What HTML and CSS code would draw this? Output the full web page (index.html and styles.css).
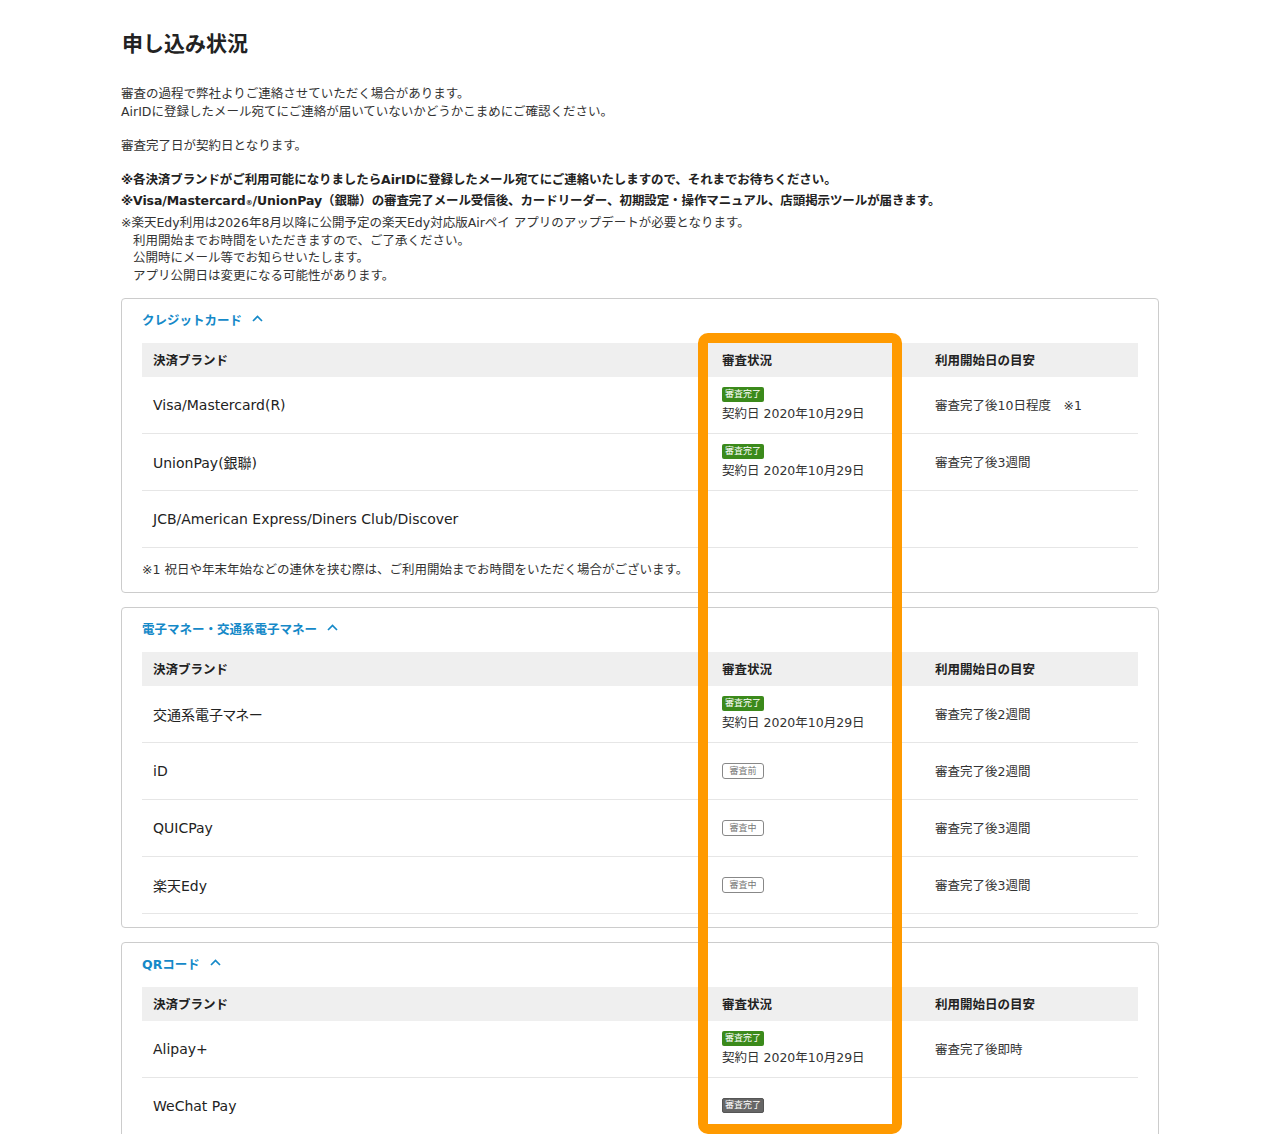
FILE: index.html
```html
<!DOCTYPE html>
<html lang="ja">
  <head>
    <meta charset="UTF-8" />
    <meta name="viewport" content="width=device-width, initial-scale=1.0" />
    <title>申し込み状況</title>
    <link rel="stylesheet" href="styles.css">
  </head>
  <body>
    <div class="page">
      <h1>申し込み状況</h1>

      <p class="lead">
        審査の過程で弊社よりご連絡させていただく場合があります。<br />
        AirIDに登録したメール宛てにご連絡が届いていないかどうかこまめにご確認ください。
      </p>
      <p class="lead">審査完了日が契約日となります。</p>

      <div class="notes-bold">
        <div>※各決済ブランドがご利用可能になりましたらAirIDに登録したメール宛てにご連絡いたしますので、それまでお待ちください。</div>
        <div>※Visa/Mastercard<span class="reg">®</span>/UnionPay（銀聯）の審査完了メール受信後、カードリーダー、初期設定・操作マニュアル、店頭掲示ツールが届きます。</div>
      </div>
      <div class="notes">
        <div>※楽天Edy利用は2026年8月以降に公開予定の楽天Edy対応版Airペイ アプリのアップデートが必要となります。</div>
        <div class="indent">利用開始までお時間をいただきますので、ご了承ください。</div>
        <div class="indent">公開時にメール等でお知らせいたします。</div>
        <div class="indent">アプリ公開日は変更になる可能性があります。</div>
      </div>

      <div class="cards">
        <section class="card">
          <div class="card-head">
            クレジットカード
            <svg class="chev" width="11" height="7" viewBox="0 0 11 7"><path d="M1 6 L5.5 1.5 L10 6" fill="none" stroke="#1589c8" stroke-width="1.7"/></svg>
          </div>
          <table class="brands">
            <colgroup><col class="c1" /><col class="c2" /><col /></colgroup>
            <tr class="thead"><th>決済ブランド</th><th>審査状況</th><th>利用開始日の目安</th></tr>
            <tr>
              <td class="name">Visa/Mastercard(R)</td>
              <td><span class="badge done">審査完了</span><div class="date">契約日 2020年10月29日</div></td>
              <td>審査完了後10日程度　※1</td>
            </tr>
            <tr>
              <td class="name">UnionPay(銀聯)</td>
              <td><span class="badge done">審査完了</span><div class="date">契約日 2020年10月29日</div></td>
              <td>審査完了後3週間</td>
            </tr>
            <tr>
              <td class="name">JCB/American Express/Diners Club/Discover</td>
              <td></td>
              <td></td>
            </tr>
          </table>
          <p class="footnote">※1 祝日や年末年始などの連休を挟む際は、ご利用開始までお時間をいただく場合がございます。</p>
        </section>

        <section class="card">
          <div class="card-head">
            電子マネー・交通系電子マネー
            <svg class="chev" width="11" height="7" viewBox="0 0 11 7"><path d="M1 6 L5.5 1.5 L10 6" fill="none" stroke="#1589c8" stroke-width="1.7"/></svg>
          </div>
          <table class="brands">
            <colgroup><col class="c1" /><col class="c2" /><col /></colgroup>
            <tr class="thead"><th>決済ブランド</th><th>審査状況</th><th>利用開始日の目安</th></tr>
            <tr>
              <td class="name">交通系電子マネー</td>
              <td><span class="badge done">審査完了</span><div class="date">契約日 2020年10月29日</div></td>
              <td>審査完了後2週間</td>
            </tr>
            <tr>
              <td class="name">iD</td>
              <td><span class="badge wait">審査前</span></td>
              <td>審査完了後2週間</td>
            </tr>
            <tr>
              <td class="name">QUICPay</td>
              <td><span class="badge wait">審査中</span></td>
              <td>審査完了後3週間</td>
            </tr>
            <tr>
              <td class="name">楽天Edy</td>
              <td><span class="badge wait">審査中</span></td>
              <td>審査完了後3週間</td>
            </tr>
          </table>
        </section>

        <section class="card">
          <div class="card-head">
            QRコード
            <svg class="chev" width="11" height="7" viewBox="0 0 11 7"><path d="M1 6 L5.5 1.5 L10 6" fill="none" stroke="#1589c8" stroke-width="1.7"/></svg>
          </div>
          <table class="brands">
            <colgroup><col class="c1" /><col class="c2" /><col /></colgroup>
            <tr class="thead"><th>決済ブランド</th><th>審査状況</th><th>利用開始日の目安</th></tr>
            <tr>
              <td class="name">Alipay+</td>
              <td><span class="badge done">審査完了</span><div class="date">契約日 2020年10月29日</div></td>
              <td>審査完了後即時</td>
            </tr>
            <tr>
              <td class="name">WeChat Pay</td>
              <td><span class="badge grey">審査完了</span></td>
              <td></td>
            </tr>
          </table>
        </section>

        <div class="highlight"></div>
      </div>
    </div>
  </body>
</html>
```

FILE: styles.css
```css
body {
  margin: 0;
  background: #fff;
  color: #333;
  font-family: "DejaVu Sans", "Noto Sans CJK JP", sans-serif;
}

.page {
  width: 1038px;
  margin: 0 auto;
  padding-top: 30px;
}

h1 {
  margin: 0 0 27px 1px;
  font-size: 21px;
  line-height: 28px;
  color: #222;
}

.lead {
  margin: 0;
  font-size: 12.5px;
  line-height: 18px;
}

.lead + .lead {
  margin-top: 16px;
}

.notes-bold {
  margin-top: 14px;
  font-size: 12.5px;
  line-height: 21px;
  font-weight: bold;
  letter-spacing: -0.1px;
  color: #222;
}

.reg {
  font-size: 7px;
  line-height: 0;
}

.notes {
  margin-top: 3px;
  font-size: 12.5px;
  line-height: 17.7px;
}

.indent {
  padding-left: 12px;
}

.cards {
  position: relative;
  margin-top: 13px;
}

.card {
  border: 1px solid #ccc;
  border-radius: 4px;
  padding: 10px 20px 13px;
  margin-bottom: 14px;
}

.card-head {
  display: flex;
  align-items: center;
  gap: 10px;
  height: 22px;
  margin-bottom: 12px;
  font-size: 12.5px;
  font-weight: bold;
  color: #1589c8;
}

.chev {
  margin-top: -2px;
}

.brands {
  width: 100%;
  border-collapse: collapse;
  table-layout: fixed;
}

.brands .c1 {
  width: 569px;
}

.brands .c2 {
  width: 213px;
}

.brands th {
  height: 34px;
  padding: 0 11px;
  background: #efefef;
  text-align: left;
  font-size: 12.5px;
  color: #222;
}

.brands td {
  height: 56px;
  padding: 0 11px;
  border-bottom: 1px solid #e6e6e6;
  font-size: 12.5px;
  color: #333;
}

.brands td.name {
  font-size: 14px;
  font-feature-settings: "palt";
  color: #222;
}

.badge {
  display: inline-block;
  box-sizing: border-box;
  width: 42px;
  height: 15px;
  border-radius: 2px;
  font-size: 9px;
  line-height: 15px;
  text-align: center;
  vertical-align: top;
}

.badge.done {
  background: #3b8a1b;
  color: #fff;
}

.badge.grey {
  background: #666;
  border: 1px solid #555;
  line-height: 13px;
  color: #fff;
}

.badge.wait {
  height: 16px;
  border: 1px solid #888;
  border-radius: 3px;
  line-height: 14px;
  color: #777;
}

.date {
  margin-top: 3px;
  font-size: 12.5px;
  line-height: 18px;
}

.footnote {
  margin: 13px 0 0;
  font-size: 12.5px;
  line-height: 18px;
}

.highlight {
  position: absolute;
  top: 35px;
  left: 577px;
  width: 184px;
  height: 781px;
  border: 10px solid #ff9a00;
  border-radius: 10px;
}
```
